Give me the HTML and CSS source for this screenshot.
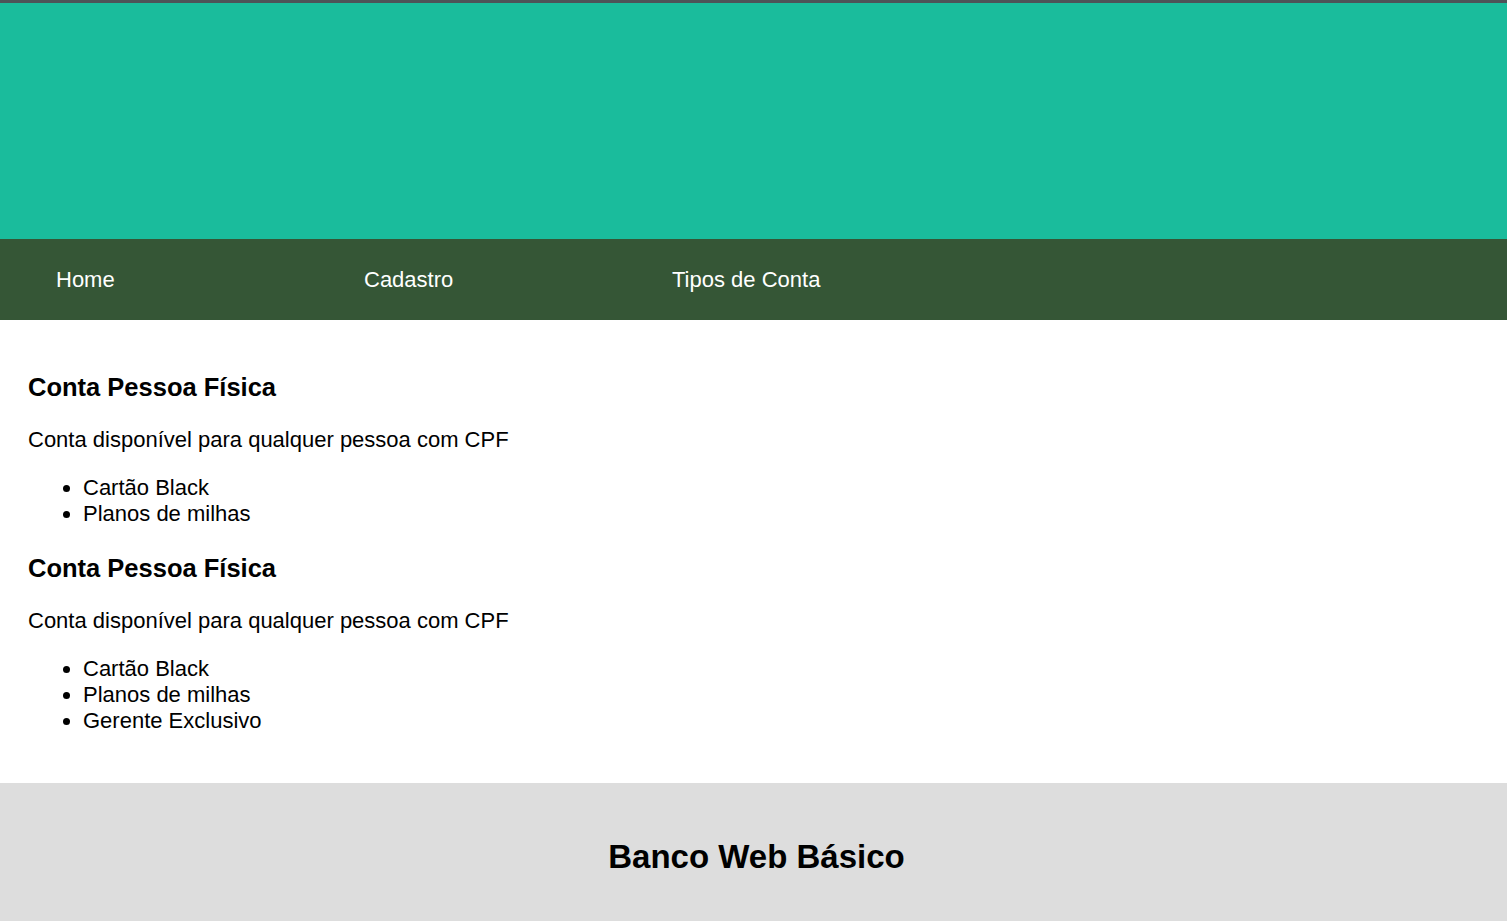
FILE: index.html
```html
<!DOCTYPE html>
<html lang="pt-BR">
<head>
<meta charset="utf-8">
<title>Banco Web Básico</title>
<link rel="stylesheet" href="styles.css">
</head>
<body>
<header class="banner"></header>
<nav class="menu">
  <ul class="menu-list">
    <li class="menu-item"><a href="#">Home</a></li>
    <li class="menu-item"><a href="#">Cadastro</a></li>
    <li class="menu-item"><a href="#">Tipos de Conta</a></li>
  </ul>
</nav>
<main class="content">
  <section class="account">
    <h2 class="account-title">Conta Pessoa Física</h2>
    <p class="account-desc">Conta disponível para qualquer pessoa com CPF</p>
    <ul class="account-list">
      <li>Cartão Black</li>
      <li>Planos de milhas</li>
    </ul>
  </section>
  <section class="account">
    <h2 class="account-title">Conta Pessoa Física</h2>
    <p class="account-desc">Conta disponível para qualquer pessoa com CPF</p>
    <ul class="account-list">
      <li>Cartão Black</li>
      <li>Planos de milhas</li>
      <li>Gerente Exclusivo</li>
    </ul>
  </section>
</main>
<footer class="footer">
  <h1 class="footer-title">Banco Web Básico</h1>
</footer>
</body>
</html>
```
FILE: styles.css
```css
* { box-sizing: border-box; }
html, body { margin: 0; padding: 0; }
body {
  font-family: "Liberation Sans", Arial, sans-serif;
  color: #000;
  background: #fff;
}
.banner {
  height: 239px;
  background: #1abc9c;
  border-top: 3px solid #4d5358;
}
.menu {
  background: #355636;
  height: 81px;
  display: flex;
  align-items: center;
  padding-left: 56px;
}
.menu-list {
  list-style: none;
  margin: 0;
  padding: 0;
  display: flex;
}
.menu-item { width: 308px; }
.menu-item a {
  color: #fff;
  text-decoration: none;
  font-size: 22px;
  line-height: 26px;
}
.content {
  padding: 53px 28px 22px;
  font-size: 22px;
  line-height: 26px;
}
.account-title {
  font-size: 25.5px;
  line-height: 28px;
  font-weight: bold;
  margin: 0 0 26px;
}
.account-desc { margin: 0 0 22px; }
.account-list {
  margin: 0 0 27px;
  padding-left: 55px;
}
.footer {
  background: #dddddd;
  padding: 55px 0 46px 6px;
  text-align: center;
}
.footer-title {
  margin: 0;
  font-size: 33px;
  line-height: 37px;
  font-weight: bold;
}
```
